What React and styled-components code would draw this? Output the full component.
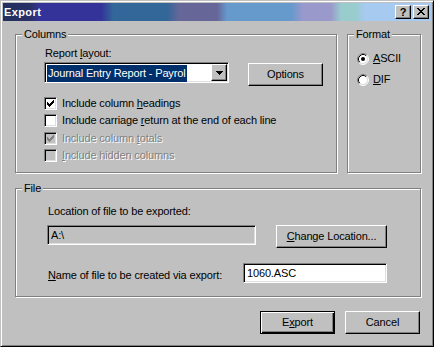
import React from "react";
import styled, { createGlobalStyle, css } from "styled-components";

const GlobalStyle = createGlobalStyle`
  html, body { margin: 0; padding: 0; background: #c0c0c0; }
  body {
    font-family: "Liberation Sans", Arial, sans-serif;
    font-size: 11px;
    letter-spacing: -0.15px;
    color: #000;
  }
  * { box-sizing: border-box; }
`;

const raised = css`
  border: 1px solid;
  border-color: #fff #000 #000 #fff;
  box-shadow: inset -1px -1px 0 #808080;
`;

const sunken = css`
  border: 1px solid;
  border-color: #808080 #fff #fff #808080;
  box-shadow: inset 1px 1px 0 #000, inset -1px -1px 0 #dfdfdf;
`;

const Window = styled.div`
  width: 434px;
  height: 347px;
  background: #c0c0c0;
  border: 1px solid;
  border-color: #c0c0c0 #000 #000 #c0c0c0;
  box-shadow: inset 1px 1px 0 #fff, inset -1px -1px 0 #808080;
  padding: 2px;
  display: flex;
  flex-direction: column;
`;

const TitleBar = styled.div`
  height: 18px;
  display: flex;
  align-items: center;
  padding: 0 2px 0 1px;
  background: linear-gradient(
    to right,
    #22305e 0px, #2a3068 28px, #333399 36px, #333399 98px,
    #336699 110px, #336699 164px, #666699 176px, #666699 214px,
    #6699cc 224px, #6699cc 288px, #9999cc 300px, #9999cc 328px,
    #99cccc 338px, #99cccc 352px, #a6caf0 362px, #a6caf0 100%
  );
`;

const TitleText = styled.span`
  flex: 1;
  color: #fff;
  font-weight: bold;
  letter-spacing: 0.4px;
  line-height: 13px;
`;

const TitleButtons = styled.div`
  display: flex;
  gap: 2px;
`;

const TitleButton = styled.div`
  ${raised};
  width: 16px;
  height: 14px;
  background: #c0c0c0;
  display: flex;
  align-items: center;
  justify-content: center;
  font-weight: bold;
  font-size: 11px;
  line-height: 12px;
  padding-bottom: 1px;
`;

const Body = styled.div`
  padding: 13px 10px 0 12px;
  display: flex;
  flex-direction: column;
`;

const TopRow = styled.div`
  display: flex;
  gap: 10px;
`;

const Group = styled.div`
  position: relative;
  width: ${(p) => p.$w}px;
  height: ${(p) => p.$h}px;
  margin-top: ${(p) => p.$top || 0}px;
  border: 1px solid #808080;
  box-shadow: inset 1px 1px 0 #fff, 1px 1px 0 #fff;
  padding: ${(p) => p.$pad};
`;

const Legend = styled.span`
  position: absolute;
  top: -7px;
  left: 6px;
  padding: 0 2px;
  background: #c0c0c0;
  line-height: 13px;
`;

const Label = styled.div`
  line-height: 13px;
  margin-top: ${(p) => p.$top || 0}px;
  color: ${(p) => (p.$disabled ? "#808080" : "#000")};
  text-shadow: ${(p) => (p.$disabled ? "1px 1px 0 #fff" : "none")};
  white-space: nowrap;
`;

const Key = styled.u`
  text-decoration: underline;
  text-underline-offset: 1px;
`;

const ComboRow = styled.div`
  display: flex;
  align-items: flex-start;
  margin-top: 2px;
  margin-left: -1px;
`;

const Combo = styled.div`
  ${sunken};
  width: 185px;
  height: 21px;
  background: #fff;
  padding: 2px;
  display: flex;
  justify-content: space-between;
`;

const Selected = styled.span`
  background: #00306b;
  color: #fff;
  line-height: 17px;
  height: 17px;
  padding: 0 1px 0 1px;
  white-space: nowrap;
`;

const DropButton = styled.div`
  ${raised};
  width: 16px;
  height: 17px;
  margin-top: -1px;
  margin-right: -1px;
  background: #c0c0c0;
  display: flex;
  align-items: center;
  justify-content: center;
`;

const Button = styled.div`
  ${raised};
  width: ${(p) => p.$w || 75}px;
  height: 23px;
  margin-top: ${(p) => p.$top || 0}px;
  margin-left: ${(p) => p.$left || 0}px;
  background: #c0c0c0;
  display: flex;
  align-items: center;
  justify-content: center;
  line-height: 13px;
  ${(p) =>
    p.$default &&
    css`
      border: 1px solid #000;
      box-shadow: inset 1px 1px 0 #fff, inset -1px -1px 0 #000,
        inset -2px -2px 0 #808080;
    `}
`;

const CheckList = styled.div`
  display: flex;
  flex-direction: column;
  margin-top: 9px;
  margin-left: -1px;
`;

const CheckRow = styled.div`
  height: ${(p) => p.$h || 17}px;
  display: flex;
  align-items: flex-start;
  padding-top: 2px;
  gap: 5px;
`;

const Box = styled.div`
  ${sunken};
  width: 13px;
  height: 13px;
  flex: none;
  background: ${(p) => (p.$disabled ? "#c0c0c0" : "#fff")};
`;

const RadioList = styled.div`
  display: flex;
  flex-direction: column;
  gap: 8px;
`;

const RadioRow = styled.div`
  height: 13px;
  display: flex;
  align-items: center;
  gap: 4px;
`;

const FieldRow = styled.div`
  display: flex;
  align-items: flex-start;
  justify-content: space-between;
  margin-top: ${(p) => p.$top}px;
`;

const Field = styled.div`
  ${sunken};
  width: ${(p) => p.$w}px;
  height: 20px;
  margin-left: ${(p) => p.$left || 0}px;
  background: ${(p) => (p.$disabled ? "#c0c0c0" : "#fff")};
  padding: 2px 3px;
  line-height: 14px;
`;

const ButtonRow = styled.div`
  display: flex;
  justify-content: flex-end;
  gap: 10px;
  margin-top: 14px;
  padding-right: 1px;
`;

const Check = ({ color }) => (
  <svg width="11" height="11" viewBox="0 0 11 11" style={{ display: "block" }}>
    <path
      fill={color}
      d="M2 4h1v3h-1z M3 5h1v3h-1z M4 6h1v3h-1z M5 5h1v3h-1z M6 4h1v3h-1z M7 3h1v3h-1z M8 2h1v3h-1z"
    />
  </svg>
);

const CheckBox = ({ checked, disabled, h, children }) => (
  <CheckRow $h={h}>
    <Box $disabled={disabled}>
      {checked && <Check color={disabled ? "#808080" : "#000"} />}
    </Box>
    <Label $disabled={disabled}>{children}</Label>
  </CheckRow>
);

const Radio = ({ checked, children }) => (
  <RadioRow>
    <svg width="12" height="12" viewBox="0 0 12 12" style={{ display: "block", flex: "none" }}>
      <circle cx="6" cy="6" r="5" fill="#fff" />
      <path d="M2.11 9.89A5.5 5.5 0 0 1 9.89 2.11" stroke="#808080" fill="none" />
      <path d="M9.89 2.11A5.5 5.5 0 0 1 2.11 9.89" stroke="#fff" fill="none" />
      <path d="M2.82 9.18A4.5 4.5 0 0 1 9.18 2.82" stroke="#000" fill="none" />
      <path d="M9.18 2.82A4.5 4.5 0 0 1 2.82 9.18" stroke="#dfdfdf" fill="none" />
      {checked && <circle cx="6" cy="6" r="2" fill="#000" />}
    </svg>
    <Label>{children}</Label>
  </RadioRow>
);

const App = () => (
  <>
    <GlobalStyle />
    <Window>
      <TitleBar>
        <TitleText>Export</TitleText>
        <TitleButtons>
          <TitleButton>?</TitleButton>
          <TitleButton>
            <svg width="8" height="7" viewBox="0 0 8 7" style={{ display: "block" }}>
              <path d="M0 0h2v1h-2z M6 0h2v1h-2z M1 1h2v1h-2z M5 1h2v1h-2z M2 2h4v1h-4z M3 3h2v1h-2z M2 4h4v1h-4z M1 5h2v1h-2z M5 5h2v1h-2z M0 6h2v1h-2z M6 6h2v1h-2z" />
            </svg>
          </TitleButton>
        </TitleButtons>
      </TitleBar>

      <Body>
        <TopRow>
          <Group $w={322} $h={139} $pad="12px 0 0 29px">
            <Legend>Columns</Legend>
            <Label>
              Report <Key>l</Key>ayout:
            </Label>
            <ComboRow>
              <Combo>
                <Selected>Journal Entry Report - Payrol</Selected>
                <DropButton>
                  <svg width="7" height="4" viewBox="0 0 7 4" style={{ display: "block" }}>
                    <path d="M0 0h7v1h-7z M1 1h5v1h-5z M2 2h3v1h-3z M3 3h1v1h-1z" />
                  </svg>
                </DropButton>
              </Combo>
              <Button $top={1} $left={19}>Options</Button>
            </ComboRow>
            <CheckList>
              <CheckBox checked>
                Include column <Key>h</Key>eadings
              </CheckBox>
              <CheckBox h={18}>
                Include carriage <Key>r</Key>eturn at the end of each line
              </CheckBox>
              <CheckBox checked disabled>
                Include column <Key>t</Key>otals
              </CheckBox>
              <CheckBox disabled>
                <Key>I</Key>nclude hidden columns
              </CheckBox>
            </CheckList>
          </Group>

          <Group $w={74} $h={139} $pad="17px 0 0 9px">
            <Legend>Format</Legend>
            <RadioList>
              <Radio checked>
                <Key>A</Key>SCII
              </Radio>
              <Radio>
                <Key>D</Key>IF
              </Radio>
            </RadioList>
          </Group>
        </TopRow>

        <Group $w={406} $h={109} $top={15} $pad="16px 33px 0 32px">
          <Legend>File</Legend>
          <Label>Location of file to be exported:</Label>
          <FieldRow $top={7}>
            <Field $w={209} $left={-1} $disabled>
              A:\
            </Field>
            <Button $w={111}>
              <Key>C</Key>hange Location...
            </Button>
          </FieldRow>
          <FieldRow $top={15}>
            <Label $top={6}>
              <Key>N</Key>ame of file to be created via export:
            </Label>
            <Field $w={144}>1060.ASC</Field>
          </FieldRow>
        </Group>

        <ButtonRow>
          <Button $default>
            E<Key>x</Key>port
          </Button>
          <Button>Cancel</Button>
        </ButtonRow>
      </Body>
    </Window>
  </>
);

export default App;
